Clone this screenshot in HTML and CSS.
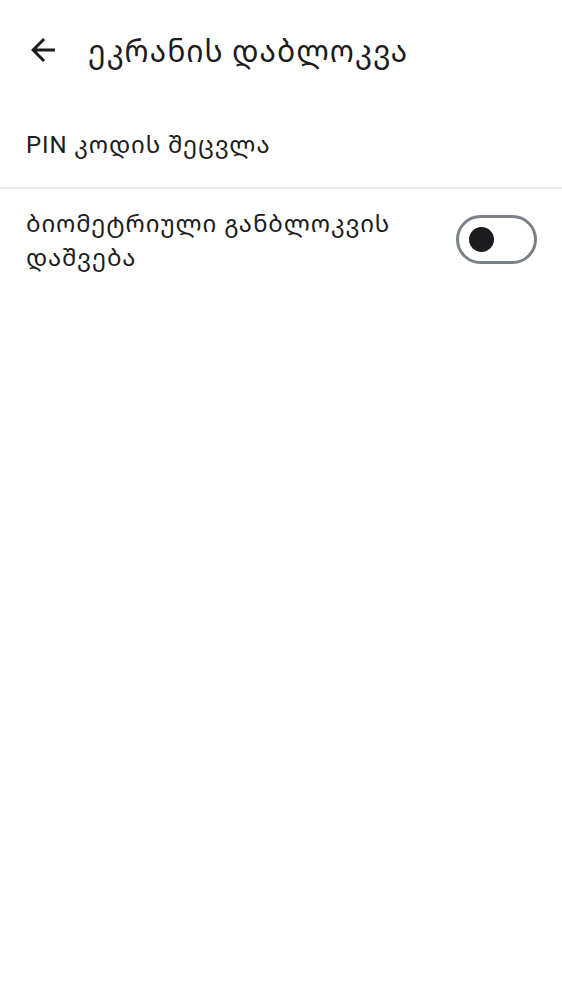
FILE: index.html
```html
<!DOCTYPE html>
<html lang="ka">
<head>
<meta charset="utf-8">
<link rel="stylesheet" href="styles.css">
</head>
<body>
<header class="topbar">
  <button class="back" aria-label="back">
    <svg viewBox="0 0 24 24" width="36" height="36"><path d="M20 11H7.83l5.59-5.59L12 4l-8 8 8 8 1.41-1.41L7.83 13H20v-2z" fill="#1d1b20"/></svg>
  </button>
  <h1 class="title">ეკრანის დაბლოკვა</h1>
</header>
<main class="list">
  <div class="row row-pin">PIN კოდის შეცვლა</div>
  <div class="divider"></div>
  <div class="row row-bio">
    <div class="label">ბიომეტრიული განბლოკვის დაშვება</div>
    <div class="switch"><div class="thumb"></div></div>
  </div>
</main>
</body>
</html>
```
FILE: styles.css
```css
html, body {
  margin: 0;
  padding: 0;
  background: #ffffff;
}
body {
  font-family: Roboto, "Noto Sans Georgian", "DejaVu Sans", sans-serif;
  color: #1d1b20;
  width: 562px;
}
.topbar {
  height: 100px;
  display: flex;
  align-items: center;
  padding-left: 25px;
  box-sizing: border-box;
}
.back {
  width: 36px;
  height: 36px;
  padding: 0;
  border: 0;
  background: none;
  display: flex;
}
.title {
  margin: 0 0 0 27px;
  font-size: 30px;
  font-weight: 400;
  letter-spacing: 1px;
}
.row {
  box-sizing: border-box;
  padding: 0 24px 0 26px;
  font-size: 24px;
  letter-spacing: 0.9px;
}
.row-pin {
  height: 87px;
  display: flex;
  align-items: center;
}
.divider {
  height: 2px;
  background: #e8e9ed;
}
.row-bio {
  display: flex;
  align-items: center;
  justify-content: space-between;
  padding-top: 18px;
  padding-right: 25px;
}
.label {
  width: 400px;
  line-height: 34px;
}
.switch {
  width: 81px;
  height: 49px;
  margin-bottom: 3px;
  box-sizing: border-box;
  border: 3px solid #7b8089;
  border-radius: 25px;
  display: flex;
  align-items: center;
  padding-left: 10px;
}
.thumb {
  width: 25px;
  height: 25px;
  border-radius: 50%;
  background: #1d1b20;
}
```
